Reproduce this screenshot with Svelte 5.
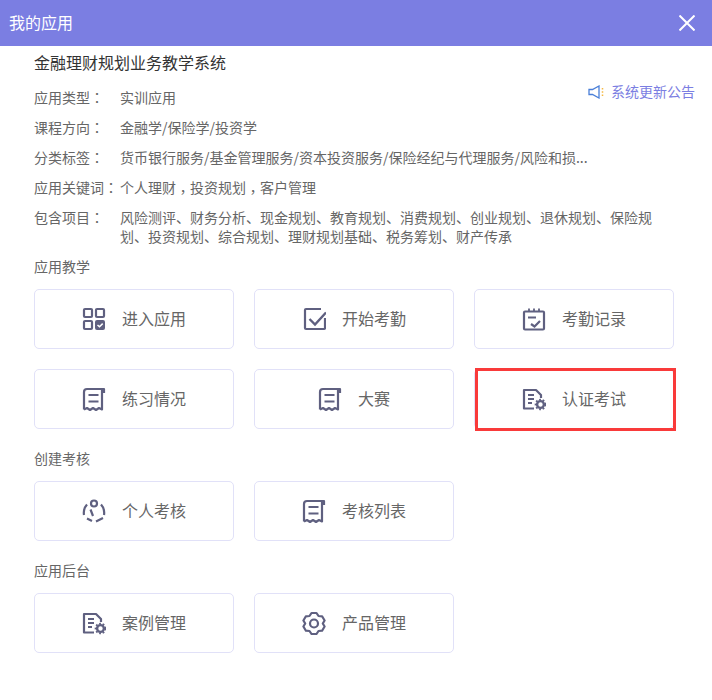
<script>
	const sections = [
		{
			title: "应用教学",
			items: [
				{ name: "进入应用", icon: "grid" },
				{ name: "开始考勤", icon: "check" },
				{ name: "考勤记录", icon: "calendar" },
				{ name: "练习情况", icon: "receipt" },
				{ name: "大赛", icon: "receipt" },
				{ name: "认证考试", icon: "docgear", marked: true }
			]
		},
		{
			title: "创建考核",
			items: [
				{ name: "个人考核", icon: "person" },
				{ name: "考核列表", icon: "receipt" }
			]
		},
		{
			title: "应用后台",
			items: [
				{ name: "案例管理", icon: "docgear" },
				{ name: "产品管理", icon: "gear" }
			]
		}
	];
</script>

{#snippet icon(kind)}
	<svg class="icon" viewBox="0 0 24 24" width="24" height="24" fill="none" stroke="#5f6080" stroke-width="2.2">
		{#if kind === "grid"}
			<rect x="2" y="2" width="8" height="8" rx="1" />
			<rect x="14" y="2" width="8" height="8" rx="1" />
			<rect x="2" y="14" width="8" height="8" rx="1" />
			<rect x="13" y="13" width="10" height="10" rx="2" fill="#5f6080" stroke="none" />
			<path d="M15.5 18l2 1.8 3.2-3.2" stroke="#fff" stroke-width="1.5" />
		{:else if kind === "check"}
			<path d="M23 11v10a1 1 0 0 1-1 1H4a1 1 0 0 1-1-1V3a1 1 0 0 1 1-1h15" />
			<path d="M7.500 12l5.500 5.500L24 5.500" stroke-width="2.400" />
		{:else if kind === "calendar"}
			<rect x="2" y="4.500" width="20" height="18" rx="1" />
			<path d="M7 1.500V4M12 1.500V4M17 1.500V4" stroke-width="1.800" />
			<path d="M6 10.500h8M9 17l3.500 2.500L18 14" />
		{:else if kind === "receipt"}
			<path d="M2 22.500V5a3 3 0 0 1 3-3h17v4" stroke-linejoin="round" />
			<path d="M20 2v20.500l-3-1.500-3 2-3-2-3 2-3-2-3 1.500" stroke-linejoin="round" />
			<path d="M6.500 8h10M6.500 14.500h10" />
		{:else if kind === "docgear"}
			<path d="M12 21.500H2V3h12l5 5v3" stroke-linejoin="round" />
			<path d="M6 8h6M6 12h6M6 16h4" />
			<circle cx="18.500" cy="17.500" r="3.400" stroke-width="2.400" />
			<circle cx="18.500" cy="17.500" r="5" stroke-width="1.600" stroke-dasharray="1.800 1.800" />
		{:else if kind === "person"}
			<circle cx="12" cy="4.500" r="3" />
			<path d="M5 5.500Q1 10 2 16M19 5.500Q23 10 22 16M5 19.500l5 2.500M14 22.500l7-3.500M8.500 10.500l2.500 6.500" />
		{:else if kind === "gear"}
			<path d="M9.500 2h5l2 3 3.600.3 2.500 4.200L20.800 12.500l1.800 3-2.500 4.200-3.600.3-2 3h-5l-2-3-3.600-.3-2.500-4.200 1.800-3-1.800-3 2.500-4.200 3.600-.3z" stroke-linejoin="round" />
			<circle cx="12" cy="12.500" r="4" />
		{/if}
	</svg>
{/snippet}

{#snippet colon()}<span class="punct">：</span>{/snippet}
{#snippet comma()}<span class="punct comma">，</span>{/snippet}

<div class="dialog">
	<header class="topbar">
		<span class="topbar-title">我的应用</span>
		<svg class="close" viewBox="0 0 16 16" width="16" height="16" stroke="#fff" stroke-width="2">
			<path d="M0.5 0.5l15 15M15.5 0.5l-15 15" />
		</svg>
	</header>

	<main class="content">
		<h2 class="app-name">金融理财规划业务教学系统</h2>

		<div class="info-row">
			<span class="label">应用类型{@render colon()}</span>
			<span class="value">实训应用</span>
			<span class="notice">
				<svg viewBox="0 0 16 14" width="16" height="14" fill="none">
					<path d="M1 4.500h3.500L11 1v12L4.500 9.500H1z" stroke="#4a7fd8" stroke-width="1.300" />
					<path d="M14.500 3v1.500M14.500 6.200v1.500M14.500 9.500V11" stroke="#f5b942" stroke-width="1.500" />
				</svg>
				系统更新公告
			</span>
		</div>
		<div class="info-row">
			<span class="label">课程方向{@render colon()}</span>
			<span class="value">金融学/保险学/投资学</span>
		</div>
		<div class="info-row">
			<span class="label">分类标签{@render colon()}</span>
			<span class="value">货币银行服务/基金管理服务/资本投资服务/保险经纪与代理服务/风险和损...</span>
		</div>
		<div class="info-row">
			<span class="label">应用关键词{@render colon()}</span>
			<span class="value">个人理财{@render comma()}投资规划{@render comma()}客户管理</span>
		</div>
		<div class="info-row multi">
			<span class="label">包含项目{@render colon()}</span>
			<span class="value wrap">风险测评、财务分析、现金规划、教育规划、消费规划、创业规划、退休规划、保险规划、投资规划、综合规划、理财规划基础、税务筹划、财产传承</span>
		</div>

		{#each sections as section}
			<h3 class="section-title">{section.title}</h3>
			<div class="cards">
				{#each section.items as item}
					<div class="card">
						{@render icon(item.icon)}
						<span class="card-name">{item.name}</span>
						{#if item.marked}
							<div class="marker"></div>
						{/if}
					</div>
				{/each}
			</div>
		{/each}
	</main>
</div>

<style>
	:global(body) {
		background: #fff;
		font-family: "Noto Sans CJK SC", "Liberation Sans", sans-serif;
	}

	.dialog { width: 712px; height: 700px; background: #fff; overflow: hidden; }

	.topbar {
		height: 46px;
		background: #7b7ee2;
		display: flex;
		align-items: center;
		justify-content: space-between;
		padding: 0 17px 0 9px;
		color: #fff;
		font-size: 16px;
	}
	.topbar-title { padding-bottom: 2px; }
	.close { display: block; }

	.content { padding: 0 17px 0 34px; }

	.app-name {
		margin: 4px 0 9px;
		font-size: 16px;
		font-weight: 400;
		line-height: 24px;
		color: #333;
	}

	.info-row {
		display: flex;
		height: 30px;
		box-sizing: border-box;
		padding-bottom: 2px;
		align-items: center;
		font-size: 14px;
		color: #666;
	}
	.label { width: 86px; flex: none; white-space: nowrap; }
	.value { white-space: nowrap; }
	/* centred full-width colon and comma */
	.punct { font-family: "Noto Sans CJK TC", sans-serif; }
	.comma { position: relative; top: 4px; }

	.notice {
		margin-left: auto;
		align-self: flex-start;
		display: flex;
		align-items: center;
		gap: 7px;
		line-height: 17px;
		color: #7b7ee2;
	}

	.multi { height: auto; align-items: flex-start; padding: 5px 0 0; line-height: 19px; }
	.wrap { white-space: normal; width: 540px; flex: none; }

	.section-title {
		margin: 10px 0 13px;
		font-size: 14px;
		font-weight: 400;
		line-height: 20px;
		color: #666;
	}
	.cards ~ .section-title { margin-top: 19px; }

	.cards {
		display: grid;
		grid-template-columns: repeat(3, 200px);
		gap: 20px;
	}

	.card {
		position: relative;
		height: 60px;
		box-sizing: border-box;
		border: 1px solid #e1e1f8;
		border-radius: 5px;
		display: flex;
		align-items: center;
		justify-content: center;
		gap: 16px;
		font-size: 16px;
		color: #666;
	}
	.card-name { padding-bottom: 2px; }
	.icon { display: block; flex: none; }

	.marker {
		position: absolute;
		left: 0;
		top: -2px;
		width: 201px;
		height: 63px;
		box-sizing: border-box;
		border: 3px solid #f93a3a;
	}
</style>
